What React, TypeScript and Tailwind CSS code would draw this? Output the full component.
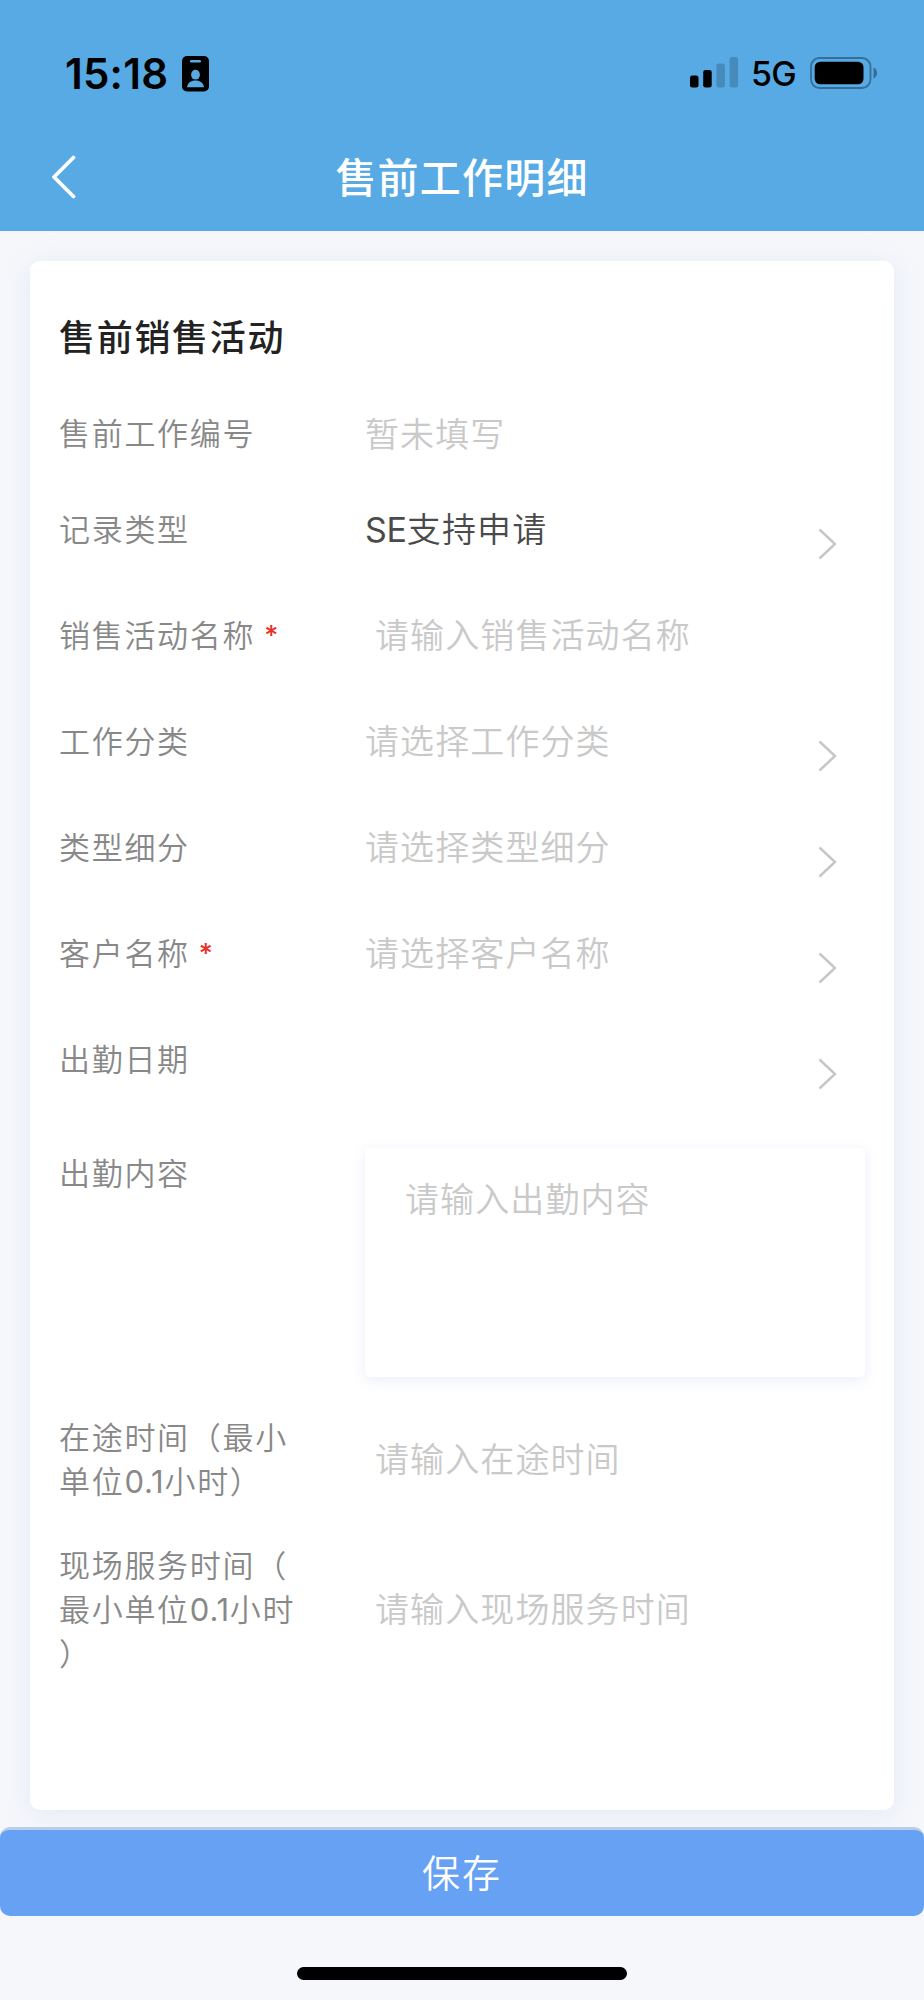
import React from 'react';
import clsx from 'clsx';

type Field = {
  label: React.ReactNode[];
  value?: React.ReactNode;
  placeholder?: string;
  required?: boolean;
  type: 'text' | 'input' | 'select';
  height: string;
};

const Num = ({ children }: { children: React.ReactNode }) => <span className="font-normal tracking-[0.8px]">{children}</span>;

const fields: Field[] = [
  { label: ['售前工作编号'], placeholder: '暂未填写', type: 'text', height: 'h-[85px]' },
  { label: ['记录类型'], value: <><span className="font-normal tracking-[-0.2px]">SE</span>支持申请</>, type: 'select', height: 'h-[106px]' },
  { label: ['销售活动名称'], placeholder: '请输入销售活动名称', required: true, type: 'input', height: 'h-[106px]' },
  { label: ['工作分类'], placeholder: '请选择工作分类', type: 'select', height: 'h-[106px]' },
  { label: ['类型细分'], placeholder: '请选择类型细分', type: 'select', height: 'h-[106px]' },
  { label: ['客户名称'], placeholder: '请选择客户名称', required: true, type: 'select', height: 'h-[106px]' },
  { label: ['出勤日期'], type: 'select', height: 'h-[106px]' },
];

const timeFields: Field[] = [
  { label: ['在途时间（最小', <>单位<Num>0.1</Num>小时）</>], placeholder: '请输入在途时间', type: 'input', height: 'h-[128px]' },
  { label: ['现场服务时间（', <>最小单位<Num>0.1</Num>小时</>, '）'], placeholder: '请输入现场服务时间', type: 'input', height: 'h-[172px]' },
];

const StatusBar = () => (
  <div className="flex h-[116px] items-end justify-between pr-[46px] pl-[65px] pb-[20px]">
    <div className="flex items-center gap-[14px]">
      <span className="text-[42px] leading-[44px] font-semibold tracking-[0.2px] text-black">15:18</span>
      <svg width="27" height="36" viewBox="0 0 27 36">
        <rect width="27" height="35.5" rx="5" fill="#000" />
        <rect x="8" y="4" width="11" height="2.6" rx="1.3" fill="#57aae4" />
        <ellipse cx="13.5" cy="18.7" rx="4.4" ry="4.9" fill="#57aae4" />
        <path d="M5 31.2c.4-4 4-6.6 8.5-6.6s8.1 2.6 8.5 6.6z" fill="#57aae4" />
      </svg>
    </div>
    <div className="flex items-center">
      <svg width="49" height="31" viewBox="0 0 49 31">
        <rect x="0" y="18.5" width="8.5" height="12" rx="2.3" fill="#000" />
        <rect x="13.2" y="13" width="8.5" height="17.5" rx="2.3" fill="#000" />
        <rect x="26.4" y="6.5" width="8.5" height="24" rx="2.3" fill="#468bba" />
        <rect x="39.6" y="0" width="8.5" height="30.5" rx="2.3" fill="#468bba" />
      </svg>
      <span className="ml-[12px] w-[59px] pt-[3px] text-[34px] leading-[44px] font-medium tracking-[-0.8px] text-black">5G</span>
      <svg width="68" height="32" viewBox="0 0 68 32">
        <rect x="1" y="1" width="59.5" height="30" rx="8.5" fill="none" stroke="#356f99" strokeWidth="1.8" />
        <rect x="4.7" y="4.7" width="48.8" height="22.6" rx="5.5" fill="#000" />
        <path d="M63.5 10.5c2 .8 3.6 3 3.6 5.5s-1.6 4.7-3.6 5.5z" fill="#356f99" />
      </svg>
    </div>
  </div>
);

const FieldRow = ({ field }: { field: Field }) => (
  <div className={clsx('flex items-center', field.height)}>
    <div className="w-[306px] shrink-0 pt-[1px] text-[31px] leading-[44px] tracking-[1.7px] whitespace-nowrap text-[#888]">
      {field.label.map((line, i) => (
        <div key={i} className="h-[44px]">
          {line}
          {field.required && <span className="ml-[9px] align-[2px] text-[27px] leading-none font-medium text-[#e8302a]">*</span>}
        </div>
      ))}
    </div>
    <div
      className={clsx(
        'flex-1 pt-[2px] text-[34px] leading-[44px] tracking-[1.1px]',
        field.type === 'input' && 'pl-[10px]',
        field.value ? 'text-[#4a4a4a]' : 'text-[#c9c9c9]',
      )}
    >
      {field.value || field.placeholder}
    </div>
    {field.type === 'select' && (
      <svg className="mt-[30px] mr-[57px]" width="19" height="32" viewBox="0 0 19 32" fill="none">
        <path d="M1.5 1.5L17 16L1.5 30.5" stroke="#c6c6c6" strokeWidth="2.4" />
      </svg>
    )}
  </div>
);

export default function App() {
  return (
    <div className="flex h-[2000px] w-[924px] flex-col bg-[#f5f7fb] font-['Inter','Noto_Sans_CJK_SC',sans-serif] font-[350]">
      <header className="h-[231px] shrink-0 bg-[#57aae4]">
        <StatusBar />
        <div className="grid h-[121px] grid-cols-[120px_1fr_120px] items-center">
          <svg className="ml-[51px]" width="25" height="44" viewBox="0 0 25 44" fill="none">
            <path d="M22.5 2.5L3 22L22.5 41.5" stroke="#fff" strokeWidth="3.8" strokeLinecap="round" strokeLinejoin="round" />
          </svg>
          <h1 className="pt-[2px] text-center text-[41px] leading-[60px] font-medium tracking-[1.2px] text-white">售前工作明细</h1>
        </div>
      </header>

      <main className="mx-[30px] mt-[30px] h-[1549px] shrink-0 rounded-[10px] bg-white pl-[29px] shadow-[0_4px_24px_rgba(200,210,235,0.35)]">
        <h2 className="h-[130px] pt-[51px] text-[36px] leading-[52px] font-medium tracking-[1.7px] text-[#222]">售前销售活动</h2>
        {fields.map((field, i) => (
          <FieldRow key={i} field={field} />
        ))}
        <div className="mt-[36px] flex h-[229px]">
          <div className="w-[306px] pt-[4px] text-[31px] leading-[44px] tracking-[1.7px] text-[#888]">出勤内容</div>
          <div className="w-[500px] rounded-[5px] bg-white pt-[30px] pl-[40px] text-[34px] leading-[44px] tracking-[1.1px] text-[#c9c9c9] shadow-[0_3px_14px_rgba(190,200,235,0.3)]">
            请输入出勤内容
          </div>
        </div>
        <div className="mt-[18px]">
          {timeFields.map((field, i) => (
            <FieldRow key={i} field={field} />
          ))}
        </div>
      </main>

      <button className="mt-[17px] h-[89px] w-full shrink-0 rounded-[10px] border-t-[3px] border-[#b9cde9] bg-[#66a1f3] text-[38px] leading-[56px] tracking-[2px] text-white">
        保存
      </button>
      <div className="mx-auto mt-[51px] h-[13px] w-[330px] rounded-full bg-black" />
    </div>
  );
}
